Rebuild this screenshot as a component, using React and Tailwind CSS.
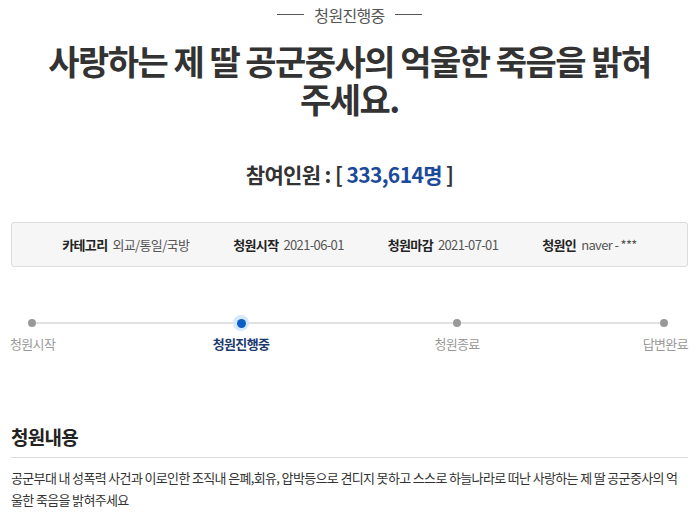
export default function App() {
  return (
    <div className="w-[699px] h-[516px] overflow-hidden bg-white text-[#333] font-['Noto_Sans_CJK_KR',sans-serif]">
      <div className="px-[11px]">
        <div className="flex items-center justify-center gap-[10px] pt-[3px] h-[26px]">
          <span className="block w-[27px] h-px bg-[#555]"></span>
          <span className="text-[16px] leading-[22px] text-[#555] tracking-[-0.04em]">청원진행중</span>
          <span className="block w-[27px] h-px bg-[#555]"></span>
        </div>
        <h1 className="mt-[16px] text-center text-[34px] leading-[38px] font-bold text-[#333] tracking-[-0.045em]">
          사랑하는 제 딸 공군중사의 억울한 죽음을 밝혀
          <br />
          주세요.
        </h1>
        <div className="mt-[41px] text-center text-[21px] leading-[30px] font-bold text-[#333] tracking-[-0.03em]">
          참여인원 : [ <span className="text-[#1b4a9a]">333,614명</span> ]
        </div>
        <div className="mt-[33px] h-[45px] rounded-[3px] border border-[#dcdcdc] bg-[#f6f6f6] flex items-center justify-center gap-[44px] text-[13px] tracking-[-0.05em]">
          <div className="flex items-center gap-[5px]"><span className="font-bold text-[#222]">카테고리</span><span className="text-[#555]">외교/통일/국방</span></div>
          <div className="flex items-center gap-[5px]"><span className="font-bold text-[#222]">청원시작</span><span className="text-[#555]">2021-06-01</span></div>
          <div className="flex items-center gap-[5px]"><span className="font-bold text-[#222]">청원마감</span><span className="text-[#555]">2021-07-01</span></div>
          <div className="flex items-center gap-[5px]"><span className="font-bold text-[#222]">청원인</span><span className="text-[#555]">naver - ***</span></div>
        </div>
        <div className="relative mt-[50px] h-[40px]">
          <div className="absolute left-[21px] right-[23px] top-[5px] h-[2px] bg-[#e2e2e2]"></div>
          <div className="absolute left-[17px] top-[2px] w-[8px] h-[8px] rounded-full bg-[#999]"></div>
          <div className="absolute left-[222px] top-[-2px] w-[16px] h-[16px] rounded-full bg-[#d6e8fb] flex items-center justify-center">
            <div className="w-[9px] h-[9px] rounded-full bg-[#0d5fc8]"></div>
          </div>
          <div className="absolute left-[442px] top-[2px] w-[8px] h-[8px] rounded-full bg-[#999]"></div>
          <div className="absolute left-[649px] top-[2px] w-[8px] h-[8px] rounded-full bg-[#999]"></div>
          <div className="absolute left-[-1px] top-[17px] text-[13px] text-[#999] tracking-[-0.05em]">청원시작</div>
          <div className="absolute left-[230px] -translate-x-1/2 top-[17px] text-[13px] font-bold text-[#1c3a6e] tracking-[-0.05em] whitespace-nowrap">청원진행중</div>
          <div className="absolute left-[446px] -translate-x-1/2 top-[17px] text-[13px] text-[#999] tracking-[-0.05em] whitespace-nowrap">청원종료</div>
          <div className="absolute right-[0px] top-[17px] text-[13px] text-[#999] tracking-[-0.05em]">답변완료</div>
        </div>
        <div className="mt-[67px] text-[19px] leading-[26px] font-bold text-[#222] tracking-[-0.04em]">청원내용</div>
        <div className="mt-[7px] h-px bg-[#dcdcdc]"></div>
        <p className="mt-[9px] text-[13px] leading-[22px] text-[#333] tracking-[-0.05em]">
          공군부대 내 성폭력 사건과 이로인한 조직내 은폐,회유, 압박등으로 견디지 못하고 스스로 하늘나라로 떠난 사랑하는 제 딸 공군중사의 억울한 죽음을 밝혀주세요
        </p>
      </div>
    </div>
  );
}
